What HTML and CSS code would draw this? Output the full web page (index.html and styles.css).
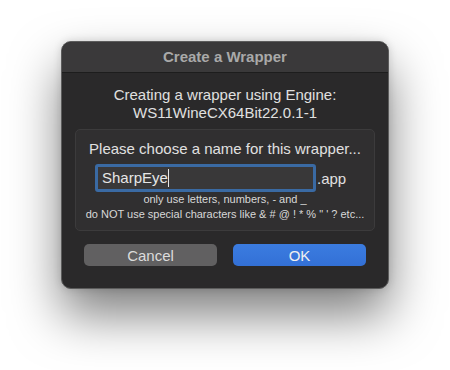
FILE: index.html
```html
<!DOCTYPE html>
<html lang="en">
<head>
  <meta charset="UTF-8">
  <title>Create a Wrapper</title>
  <link rel="stylesheet" href="styles.css">
</head>
<body>
  <div class="stage">
    <div class="dialog">
      <div class="titlebar">Create a Wrapper</div>

      <div class="engine-info">
        <div>Creating a wrapper using Engine:</div>
        <div>WS11WineCX64Bit22.0.1-1</div>
      </div>

      <div class="name-box">
        <div class="name-prompt">Please choose a name for this wrapper...</div>
        <div class="name-row">
          <div class="name-input">SharpEye<span class="caret"></span></div>
          <span class="name-ext">.app</span>
        </div>
        <div class="name-hint">only use letters, numbers, - and _</div>
        <div class="name-hint">do NOT use special characters like &amp; # @ ! * % " ' ? etc...</div>
      </div>

      <div class="buttons">
        <button class="btn btn-cancel">Cancel</button>
        <button class="btn btn-ok">OK</button>
      </div>
    </div>
  </div>
</body>
</html>
```

FILE: styles.css
```css
body {
  margin: 0;
  background: #fff;
  font-family: 'Liberation Sans', Arial, sans-serif;
  color: #e0e0e0;
}

.stage {
  padding: 41px 0 0 61px;
  height: 329px;
}

.dialog {
  width: 328px;
  height: 248px;
  box-sizing: border-box;
  background: #2a292a;
  border: 1px solid #5c5c5c;
  border-radius: 10px;
  box-shadow: 0 26px 50px rgba(0,0,0,0.5), 0 0 8px rgba(0,0,0,0.15);
  overflow: hidden;
  display: flex;
  flex-direction: column;
  align-items: center;
}

.titlebar {
  align-self: stretch;
  height: 30px;
  line-height: 30px;
  background: #3a393a;
  border-bottom: 1px solid #1d1d1d;
  text-align: center;
  font-weight: bold;
  font-size: 15px;
  color: #a9a9a9;
}

.engine-info {
  margin-top: 13px;
  text-align: center;
  font-size: 15px;
  line-height: 18px;
}

.name-box {
  margin-top: 7px;
  width: 300px;
  height: 102px;
  box-sizing: border-box;
  background: #302f30;
  border: 1px solid #3c3b3c;
  border-radius: 5px;
  display: flex;
  flex-direction: column;
  align-items: center;
  padding-top: 10px;
}

.name-prompt {
  font-size: 15px;
  line-height: 18px;
}

.name-row {
  align-self: flex-start;
  display: flex;
  align-items: center;
  margin: 6px 0 0 19px;
}

.name-input {
  width: 221px;
  height: 28px;
  box-sizing: border-box;
  border: 3px solid #3a6aa3;
  border-radius: 3px;
  background: #393839;
  font-size: 15px;
  line-height: 22px;
  padding-left: 4px;
  color: #e6e6e6;
  display: flex;
  align-items: center;
}

.caret {
  display: inline-block;
  width: 1px;
  height: 18px;
  background: #e6e6e6;
}

.name-ext {
  font-size: 15px;
  margin-left: 1px;
}

.name-hint {
  font-size: 11px;
  line-height: 15px;
  color: #d8d8d8;
}

.name-hint:first-of-type {
  margin-top: 6px;
}

.buttons {
  display: flex;
  gap: 16px;
  margin-top: 13px;
}

.btn {
  width: 133px;
  height: 22px;
  border: none;
  border-radius: 5px;
  font-family: inherit;
  font-size: 15px;
  padding: 0;
}

.btn-cancel {
  background: #616061;
  color: #dcdcdc;
}

.btn-ok {
  background: linear-gradient(#3b7ce0, #3370d6);
  color: #f0f0f0;
}
```
